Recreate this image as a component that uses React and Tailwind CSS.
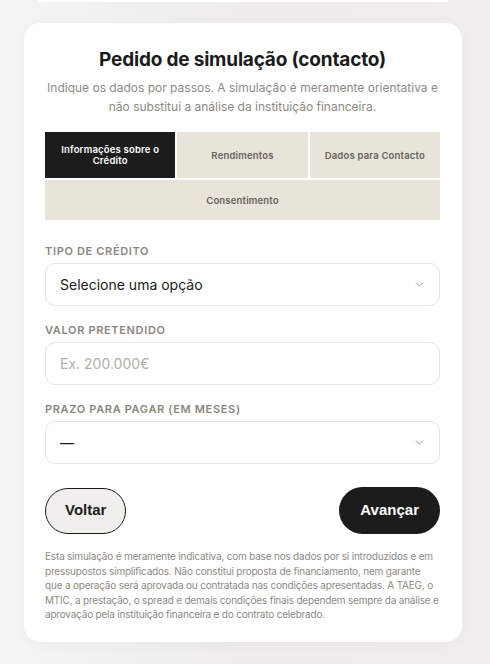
import React, { useState } from 'react';
import { ChevronDown } from 'lucide-react';

const steps = [
    { id: 'credito', label: 'Informações sobre o Crédito' },
    { id: 'rendimentos', label: 'Rendimentos' },
    { id: 'contacto', label: 'Dados para Contacto' },
    { id: 'consentimento', label: 'Consentimento' },
];

const Label = ({ children }) => (
    <div className="text-[11px] leading-[14px] font-semibold tracking-[0.06em] uppercase text-[#8b8780] mb-[5px]">{children}</div>
);

const SelectBox = ({ value }) => (
    <div className="h-[43px] flex items-center justify-between pl-[14px] pr-[13px] border border-[#e6e4df] rounded-[10px] bg-white">
        <span className="text-[14px] text-[#1b1b1b]">{value}</span>
        <ChevronDown size={13} strokeWidth={1.6} className="text-[#8b8780]" />
    </div>
);

const App = () => {
    const [active] = useState('credito');
    const [valor, setValor] = useState('');

    return (
        <div className="min-h-[664px] bg-gradient-to-r from-[#f4f4f1] via-[#eeede9] to-[#efeeea] font-['Inter',sans-serif] text-[#1b1b1b]">
            {/* bottom edge of previous card */}
            <div className="ml-[38px] mr-[42px] h-[2px] bg-white rounded-b-[12px]" />

            <div className="ml-[24px] mr-[28px] mt-[21px] bg-white rounded-[16px] pl-[21px] pr-[22px] pt-[24px] pb-[20px] shadow-[0_2px_14px_rgba(0,0,0,0.03)]">
                <h1 className="text-center text-[19px] font-bold tracking-[-0.01em] leading-[26px]">Pedido de simulação (contacto)</h1>
                <p className="mt-[5px] text-center text-[12px] leading-[19px] text-[#8e8a84]">
                    Indique os dados por passos. A simulação é meramente orientativa e não substitui a análise da instituição financeira.
                </p>

                {/* steps */}
                <div className="mt-[16px] flex flex-wrap gap-[2px]">
                    {steps.map((s, i) => (
                        <div
                            key={s.id}
                            className={
                                (i === 3 ? 'basis-full h-[40px] ' : 'flex-1 h-[46px] ') +
                                'flex items-center justify-center text-center px-[12px] text-[9.5px] font-semibold leading-[11px] tracking-[0.02em] ' +
                                (active === s.id ? 'bg-[#1c1c1c] text-white' : 'bg-[#e8e4da] text-[#66625c]')
                            }
                        >
                            {s.label}
                        </div>
                    ))}
                </div>

                <div className="mt-[24px]">
                    <Label>Tipo de crédito</Label>
                    <SelectBox value="Selecione uma opção" />
                </div>

                <div className="mt-[17px]">
                    <Label>Valor pretendido</Label>
                    <input
                        type="text"
                        value={valor}
                        onChange={(e) => setValor(e.target.value)}
                        placeholder="Ex. 200.000€"
                        className="w-full h-[43px] px-[14px] border border-[#e6e4df] rounded-[10px] text-[14px] placeholder-[#b3afa9] focus:outline-none"
                    />
                </div>

                <div className="mt-[17px]">
                    <Label>Prazo para pagar (em meses)</Label>
                    <SelectBox value="—" />
                </div>

                <div className="mt-[23px] flex items-center justify-between">
                    <button className="h-[46px] px-[19px] rounded-full border border-[#1c1c1c] bg-[#f0efeb] font-['Liberation_Sans',sans-serif] font-bold text-[15px] text-[#1c1c1c]">
                        Voltar
                    </button>
                    <button className="h-[47px] px-[21px] rounded-full bg-[#1c1c1c] font-['Liberation_Sans',sans-serif] font-bold text-[15px] text-white">
                        Avançar
                    </button>
                </div>

                <p className="mt-[15px] text-[10px] leading-[14.5px] tracking-[-0.02em] text-[#8e8a84]">
                    Esta simulação é meramente indicativa, com base nos dados por si introduzidos e em pressupostos simplificados. Não constitui proposta de financiamento, nem garante que a operação será aprovada ou contratada nas condições apresentadas. A TAEG, o MTIC, a prestação, o spread e demais condições finais dependem sempre da análise e aprovação pela instituição financeira e do contrato celebrado.
                </p>
            </div>
        </div>
    );
};

export default App;
